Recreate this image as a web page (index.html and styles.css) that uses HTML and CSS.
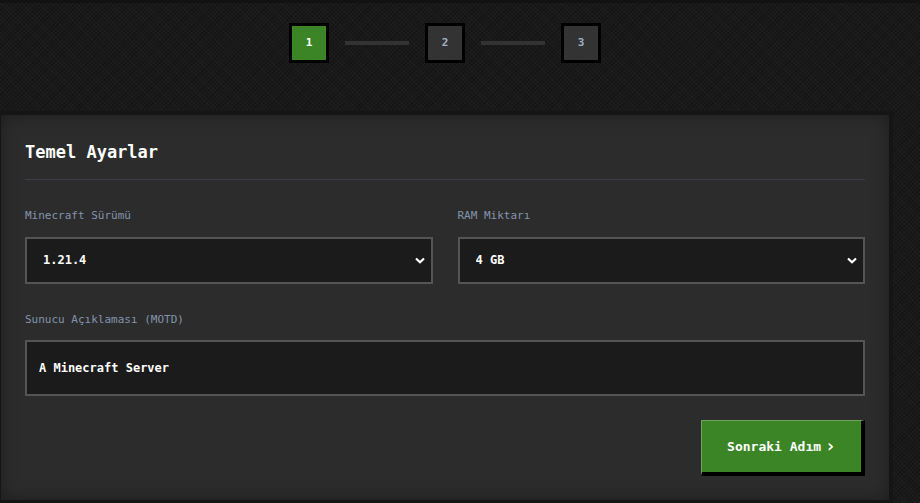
FILE: index.html
```html
<!DOCTYPE html>
<html lang="tr">
<head>
    <meta charset="UTF-8">
    <meta name="viewport" content="width=device-width, initial-scale=1.0">
    <title>Sunucu Oluştur</title>
    <link rel="stylesheet" href="styles.css">
</head>
<body>
    <div class="topbar"></div>

    <div class="wrap">
        <div class="stepper">
            <div class="step active">1</div>
            <div class="step-line"></div>
            <div class="step">2</div>
            <div class="step-line"></div>
            <div class="step">3</div>
        </div>

        <div class="card">
            <h2 class="card-title">Temel Ayarlar</h2>

            <div class="row">
                <div class="field">
                    <label class="field-label" for="version">Minecraft Sürümü</label>
                    <div class="select-box">
                        <select id="version" class="select">
                            <option>1.21.4</option>
                            <option>1.21.3</option>
                            <option>1.20.6</option>
                        </select>
                        <svg class="chevron" width="10" height="7" viewBox="0 0 10 7">
                            <path d="M1 1.5 L5 5.2 L9 1.5" fill="none" stroke="#fff" stroke-width="2.2"/>
                        </svg>
                    </div>
                </div>
                <div class="field">
                    <label class="field-label" for="ram">RAM Miktarı</label>
                    <div class="select-box">
                        <select id="ram" class="select">
                            <option>4 GB</option>
                            <option>6 GB</option>
                            <option>8 GB</option>
                        </select>
                        <svg class="chevron" width="10" height="7" viewBox="0 0 10 7">
                            <path d="M1 1.5 L5 5.2 L9 1.5" fill="none" stroke="#fff" stroke-width="2.2"/>
                        </svg>
                    </div>
                </div>
            </div>

            <div class="field field-wide">
                <label class="field-label" for="motd">Sunucu Açıklaması (MOTD)</label>
                <input id="motd" class="input" type="text" value="A Minecraft Server">
            </div>

            <div class="actions">
                <button class="btn-next">Sonraki Adım <span class="btn-arrow">›</span></button>
            </div>
        </div>
    </div>
</body>
</html>
```

FILE: styles.css
```css
* {
    margin: 0;
    padding: 0;
    box-sizing: border-box;
    font-family: 'DejaVu Sans Mono', 'Liberation Mono', monospace;
}

body {
    background-color: #191919;
    background-image:
        repeating-linear-gradient(45deg, rgba(255, 255, 255, 0.018) 0 1px, transparent 1px 3px),
        repeating-linear-gradient(-45deg, rgba(0, 0, 0, 0.2) 0 1px, transparent 1px 3px);
    color: #fff;
    line-height: 1.6;
    overflow: hidden;
}

.topbar {
    height: 3px;
    background: #121212;
}

.wrap {
    width: 896px;
    margin-left: -3px;
}

/* step indicator */
.stepper {
    display: flex;
    align-items: center;
    justify-content: center;
    gap: 16px;
    padding-top: 20px;
    margin-bottom: 48px;
}

.step {
    width: 40px;
    height: 40px;
    border: 3px solid #000;
    background: #333;
    color: #9fb0c8;
    font-size: 11px;
    font-weight: bold;
    display: flex;
    align-items: center;
    justify-content: center;
}

.step.active {
    background: #3c8527;
    color: #fff;
}

.step-line {
    width: 64px;
    height: 4px;
    background: #333;
}

/* settings card */
.card {
    background: #2c2c2c;
    border: 4px solid #151515;
    box-shadow: inset 0 0 18px rgba(0, 0, 0, 0.35);
    padding: 24px;
}

.card-title {
    font-size: 17px;
    font-weight: bold;
    line-height: 1.6;
    padding-bottom: 13px;
    border-bottom: 1px solid #3b4046;
    margin-bottom: 27px;
}

.row {
    display: grid;
    grid-template-columns: 1fr 1fr;
    gap: 25px;
}

.field-label {
    display: block;
    font-size: 11px;
    color: #8494ab;
    margin-bottom: 12px;
}

.field-wide {
    margin-top: 27px;
}

.select-box {
    position: relative;
}

.select {
    appearance: none;
    -webkit-appearance: none;
    width: 100%;
    height: 47px;
    background: #1b1b1b;
    border: 2px solid #555;
    border-radius: 0;
    color: #fff;
    font-size: 12px;
    font-weight: bold;
    padding: 0 16px;
    outline: none;
}

.chevron {
    position: absolute;
    right: 8px;
    top: 20px;
}

.input {
    width: 100%;
    height: 56px;
    background: #1b1b1b;
    border: 2px solid #555;
    color: #fff;
    font-size: 12px;
    font-weight: bold;
    padding: 0 12px;
    outline: none;
}

.actions {
    display: flex;
    justify-content: flex-end;
    margin-top: 24px;
}

.btn-next {
    width: 164px;
    height: 56px;
    background: #3c8527;
    color: #fff;
    font-size: 13px;
    font-weight: bold;
    border-top: 1px solid #6ea360;
    border-left: 1px solid #6ea360;
    border-right: 4px solid #000;
    border-bottom: 4px solid #000;
    cursor: pointer;
    display: flex;
    align-items: center;
    justify-content: center;
    gap: 4px;
}

.btn-arrow {
    font-size: 18px;
    line-height: 1;
    margin-top: -2px;
}
```
